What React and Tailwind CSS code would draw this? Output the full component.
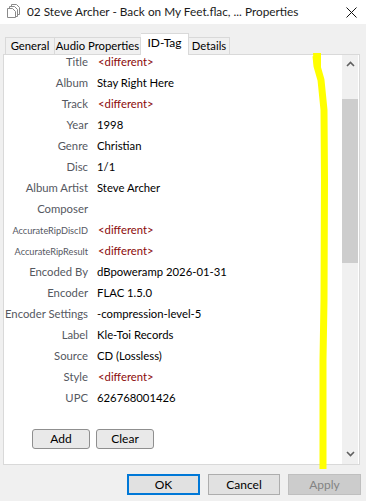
const rows = [
  { label: 'Title', value: '<different>', diff: true },
  { label: 'Album', value: 'Stay Right Here' },
  { label: 'Track', value: '<different>', diff: true },
  { label: 'Year', value: '1998' },
  { label: 'Genre', value: 'Christian' },
  { label: 'Disc', value: '1/1' },
  { label: 'Album Artist', value: 'Steve Archer' },
  { label: 'Composer', value: '' },
  { label: 'AccurateRipDiscID', value: '<different>', diff: true, small: true },
  { label: 'AccurateRipResult', value: '<different>', diff: true, small: true },
  { label: 'Encoded By', value: 'dBpoweramp 2026-01-31' },
  { label: 'Encoder', value: 'FLAC 1.5.0' },
  { label: 'Encoder Settings', value: '-compression-level-5' },
  { label: 'Label', value: 'Kle-Toi Records' },
  { label: 'Source', value: 'CD (Lossless)' },
  { label: 'Style', value: '<different>', diff: true },
  { label: 'UPC', value: '626768001426' },
];

function DocsIcon() {
  return (
    <svg width="13" height="14" viewBox="0 0 13 14" fill="none" stroke="#8a8a8a" strokeWidth="1">
      <path d="M4.5 0.5h5l3 3v7h-8z" fill="#fff" />
      <path d="M2.5 2.5h5l3 3v7h-8z" fill="#fff" />
      <path d="M0.5 4.5h5l3 3v6h-8z" fill="#fff" />
    </svg>
  );
}

export default function App() {
  return (
    <div className="relative h-[501px] w-[366px] overflow-hidden bg-[#f0f0f0] font-['Lato',sans-serif] text-[11.3px] text-black">
      {/* title bar */}
      <div className="flex h-[24px] items-center bg-white">
        <div className="ml-[7px] mt-[-2px]"><DocsIcon /></div>
        <span className="ml-[7px] text-[11.8px] text-[#1a1a1a]">02 Steve Archer - Back on My Feet.flac, ... Properties</span>
        <svg className="ml-auto mr-[9px]" width="11" height="11" viewBox="0 0 11 11" stroke="#111" strokeWidth="1">
          <path d="M0.5 0.5l10 10M10.5 0.5l-10 10" />
        </svg>
      </div>

      {/* tabs */}
      <div className="mt-[9px] flex h-[21px] items-end pl-[5px]">
        <div className="flex h-[17px] w-[50px] items-center justify-center border border-b-0 border-[#d9d9d9] bg-[#f0f0f0] pt-[1px]">General</div>
        <div className="flex h-[17px] w-[86px] items-center justify-center border border-b-0 border-l-0 border-[#d9d9d9] bg-[#f0f0f0] pt-[1px]">Audio Properties</div>
        <div className="relative z-10 mb-[-1px] flex h-[22px] w-[48px] items-center justify-center border border-b-0 border-l-0 border-[#d9d9d9] bg-white pb-[3px] text-[12px]">ID-Tag</div>
        <div className="flex h-[17px] w-[41px] items-center justify-center border border-b-0 border-l-0 border-[#d9d9d9] bg-[#f0f0f0] pt-[1px]">Details</div>
      </div>

      {/* panel */}
      <div className="ml-[3px] flex h-[411px] w-[357px] border border-[#d9d9d9] bg-white">
        <div className="flex-1 overflow-hidden">
          <div className="-mt-[3px]">
            {rows.map((r) => (
              <div key={r.label} className="flex h-[21px] items-center">
                <div className={`w-[84px] whitespace-nowrap text-right text-[#55585f] ${r.small ? 'text-[9.2px]' : ''}`}>{r.label}</div>
                <div className={`ml-[9px] whitespace-nowrap ${r.diff ? 'pl-[1px] text-[#8b0a0a]' : ''}`}>{r.value}</div>
              </div>
            ))}
          </div>
          <div className="ml-[28px] mt-[20px] flex gap-[6px]">
            <button className="h-[20px] w-[58px] rounded-[3px] border border-[#8f8f8f] bg-[#e9e9e9] text-[12px]">Add</button>
            <button className="h-[20px] w-[58px] rounded-[3px] border border-[#8f8f8f] bg-[#e9e9e9] text-[12px]">Clear</button>
          </div>
        </div>
        <div className="mr-[1px] flex w-[16px] flex-col bg-[#f0f0f0]">
          <div className="flex h-[17px] items-center justify-center">
            <svg width="9" height="6" viewBox="0 0 9 6" fill="none" stroke="#606060" strokeWidth="1.6">
              <path d="M1 5l3.5-3.5L8 5" />
            </svg>
          </div>
          <div className="mt-[27px] h-[164px] bg-[#cdcdcd]" />
          <div className="flex-1" />
          <div className="mb-[2px] flex h-[17px] items-center justify-center">
            <svg width="9" height="6" viewBox="0 0 9 6" fill="none" stroke="#606060" strokeWidth="1.6">
              <path d="M1 1l3.5 3.5L8 1" />
            </svg>
          </div>
        </div>
      </div>

      {/* dialog buttons */}
      <div className="mt-[9px] flex justify-end gap-[8px] pr-[5px]">
        <button className="h-[21px] w-[73px] border-2 border-[#0078d7] bg-[#e1e1e1] text-[12px]">OK</button>
        <button className="h-[21px] w-[72px] border border-[#adadad] bg-[#e1e1e1] text-[12px]">Cancel</button>
        <button className="h-[21px] w-[73px] border border-[#bfbfbf] bg-[#cccccc] text-[12px] text-[#838383]">Apply</button>
      </div>

      {/* highlighter mark */}
      <svg className="pointer-events-none absolute inset-0" width="366" height="501" viewBox="0 0 366 501">
        <path d="M316 56 L317 66 L321 80 L324 110 L324.5 180 L324 300 L323 360 L323 430 L323 469" fill="none" stroke="#ffff00" strokeWidth="7" strokeLinejoin="round" />
        <path d="M313 53 h8 v14 h-7z" fill="#ffff00" />
      </svg>
    </div>
  );
}
